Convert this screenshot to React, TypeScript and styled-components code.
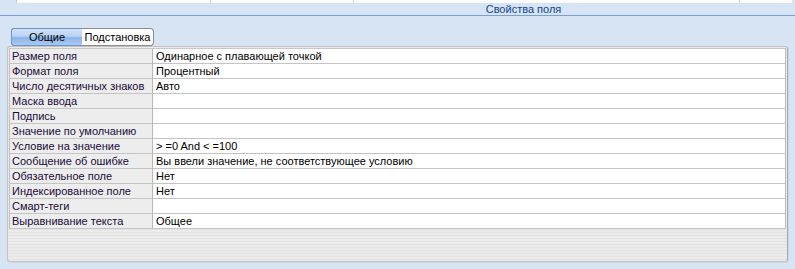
import React from 'react';
import styled, { createGlobalStyle } from 'styled-components';

const GlobalStyle = createGlobalStyle`
  html, body {
    margin: 0;
    padding: 0;
    background-color: #d6e4f3;
  }
  body {
    font-family: 'Liberation Sans', Arial, sans-serif;
    font-size: 11px;
  }
`;

const Pane = styled.div`
  width: 795px;
  height: 269px;
  display: flex;
  flex-direction: column;
  background-color: #d6e4f3;
  overflow: hidden;
`;

const TopStrip = styled.div`
  height: 3px;
  margin-left: 16px;
  margin-right: 3px;
  background-color: #fff;
  border-left: 1px solid #b9c9dd;
  display: flex;
`;

const StripCell = styled.div<{ $width: number }>`
  width: ${(p) => p.$width}px;
  border-right: 1px solid #c6d3e3;
`;

const Header = styled.div`
  height: 12px;
  padding-left: 252px;
  border-bottom: 1px solid #7c9fd2;
  display: flex;
  justify-content: center;
  align-items: center;
  color: #15428b;
  font-size: 11px;
  line-height: 12px;
`;

const TabRow = styled.div`
  display: flex;
  padding-left: 11px;
  margin-top: 12px;
  height: 18px;
  position: relative;
  z-index: 1;
`;

const Tab = styled.div<{ $active?: boolean }>`
  box-sizing: border-box;
  height: 18px;
  display: flex;
  align-items: center;
  justify-content: center;
  font-size: 11px;
  color: #000;
  ${(p) =>
    p.$active
      ? `
    width: 71px;
    border: 1px solid #6f93cf;
    border-right: none;
    border-radius: 3px 0 0 3px;
    background: linear-gradient(#d3e3f8 0%, #b9d2f3 45%, #8cb4ea 55%, #a9c9f2 100%);
  `
      : `
    width: 72px;
    border: 1px solid #8c8c8c;
    border-left: none;
    border-radius: 0 4px 4px 0;
    background: #fff;
  `}
`;

const Panel = styled.div`
  box-sizing: border-box;
  margin: 0 7px 0 7px;
  height: 216px;
  border: 1px solid #c2c2c2;
  border-right-color: #a9a9a9;
  border-radius: 3px;
  padding: 1px 1px 0 1px;
  background: repeating-linear-gradient(#ebebeb 0px, #ebebeb 2px, #e3e3e3 2px, #e3e3e3 3px);
  box-shadow: 1px 1px 0 #cfd8e4;
`;

const Grid = styled.div`
  display: grid;
  grid-template-columns: 143px 1fr;
  border-top: 1px solid #c9c9c9;
  border-left: 1px solid #c0c0c0;
  border-right: 1px solid #c0c0c0;
`;

const Label = styled.div`
  height: 14px;
  border-bottom: 1px solid #c4c4c4;
  border-right: 1px solid #b8b8b8;
  background-color: #ededed;
  padding-left: 2px;
  color: #200a3a;
  line-height: 15px;
  white-space: nowrap;
  overflow: hidden;
`;

const Value = styled.div`
  height: 14px;
  border-bottom: 1px solid #c4c4c4;
  background-color: #fff;
  padding-left: 3px;
  color: #000;
  line-height: 15px;
  white-space: nowrap;
  overflow: hidden;
`;

const rows: [string, string][] = [
  ['Размер поля', 'Одинарное с плавающей точкой'],
  ['Формат поля', 'Процентный'],
  ['Число десятичных знаков', 'Авто'],
  ['Маска ввода', ''],
  ['Подпись', ''],
  ['Значение по умолчанию', ''],
  ['Условие на значение', '> =0 And < =100'],
  ['Сообщение об ошибке', 'Вы ввели значение, не соответствующее условию'],
  ['Обязательное поле', 'Нет'],
  ['Индексированное поле', 'Нет'],
  ['Смарт-теги', ''],
  ['Выравнивание текста', 'Общее'],
];

const App: React.FC = () => {
  return (
    <Pane>
      <GlobalStyle />
      <TopStrip>
        <StripCell $width={193} />
        <StripCell $width={142} />
        <StripCell $width={385} />
      </TopStrip>
      <Header>Свойства поля</Header>
      <TabRow>
        <Tab $active>Общие</Tab>
        <Tab>Подстановка</Tab>
      </TabRow>
      <Panel>
        <Grid>
          {rows.map(([label, value]) => (
            <React.Fragment key={label}>
              <Label>{label}</Label>
              <Value>{value}</Value>
            </React.Fragment>
          ))}
        </Grid>
      </Panel>
    </Pane>
  );
};

export default App;
